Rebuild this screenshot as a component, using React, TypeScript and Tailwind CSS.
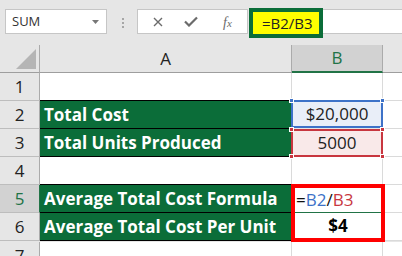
import React from 'react';

const cellFont = "font-['Open_Sans',sans-serif]";

const RowHead = ({ n, active }: { n: number; active?: boolean }) => (
  <div
    className={`w-[40px] h-[28px] shrink-0 flex items-center justify-center border-r border-b text-[17px] ${cellFont} ${
      active
        ? 'bg-[#d2d2d2] border-r-[#217346] border-b-[#bdbdbd] text-[#217346]'
        : 'bg-[#e6e6e6] border-r-[#ababab] border-b-[#bdbdbd] text-[#222]'
    }`}
  >
    {n}
  </div>
);

const GreenCell = ({ text }: { text: string }) => (
  <div className={`w-[251px] h-[28px] shrink-0 flex items-center pl-[4px] bg-[#0b6d39] border-b border-black text-white font-bold text-[17px] ${cellFont}`}>
    {text}
  </div>
);

const Blank = ({ w }: { w: string }) => (
  <div className={`${w} h-[28px] shrink-0 bg-white border-r border-b border-[#dadada]`} />
);

const Corner = ({ color, className }: { color: string; className: string }) => (
  <span className={`absolute w-[5px] h-[5px] ${color} border border-white ${className}`} />
);

export default function App() {
  return (
    <div className="w-[402px] h-[256px] overflow-hidden bg-[#e6e6e6]">
      {/* formula bar */}
      <div className="flex items-start h-[45px] pt-[8px] pl-[5px]">
        <div className="mt-[1px] h-[25px] w-[102px] shrink-0 bg-white border border-[#c6c6c6] flex items-center justify-between pl-[6px] pr-[7px]">
          <span className="text-[13px] text-[#333] font-['Open_Sans',sans-serif]">SUM</span>
          <svg width="7" height="4" viewBox="0 0 7 4"><path d="M0 0h7L3.5 4z" fill="#777" /></svg>
        </div>
        <div className="mt-[10px] ml-[15px] flex flex-col gap-[2px]">
          <span className="w-[2px] h-[2px] bg-[#a6a6a6]" />
          <span className="w-[2px] h-[2px] bg-[#a6a6a6]" />
          <span className="w-[2px] h-[2px] bg-[#a6a6a6]" />
        </div>
        <div className="ml-[13px] mt-[1px] h-[25px] w-[111px] shrink-0 bg-white border border-[#c6c6c6] relative">
          <svg className="absolute left-[15px] top-[7px]" width="10" height="10" viewBox="0 0 10 10">
            <path d="M1 1l8 8M9 1l-8 8" stroke="#6b6b6b" strokeWidth="1.4" />
          </svg>
          <svg className="absolute left-[46px] top-[6px]" width="14" height="11" viewBox="0 0 14 11">
            <path d="M1 5.5l4 4L13 1.5" stroke="#6b6b6b" strokeWidth="2.2" fill="none" />
          </svg>
          <span className="absolute left-[85px] top-[2px] text-[14px] italic text-[#6b6b6b] font-['Liberation_Serif',serif]">
            f<span className="text-[11px]">x</span>
          </span>
        </div>
        <div className="ml-[1px] h-[30px] w-[74px] shrink-0 border-[4px] border-[#0b6d39] bg-[#ffff00] flex items-center pl-[9px] text-[15px] text-[#222] font-['Open_Sans',sans-serif]">
          =B2/B3
        </div>
        <div className="mt-[1px] h-[25px] flex-1 bg-white border-y border-[#c6c6c6]" />
      </div>

      {/* column headers */}
      <div className="flex h-[28px]">
        <div className="w-[40px] shrink-0 border-r border-b border-r-[#ababab] border-b-[#9e9e9e] flex items-end justify-end pr-[3px] pb-[3px]">
          <svg width="20" height="20" viewBox="0 0 20 20"><path d="M20 0V20H0z" fill="#b5b5b5" /></svg>
        </div>
        <div className={`w-[252px] shrink-0 border-r border-b border-r-[#ababab] border-b-[#9e9e9e] flex items-center justify-center text-[17px] text-[#222] ${cellFont}`}>
          A
        </div>
        <div className={`w-[91px] shrink-0 bg-[#d2d2d2] border-r border-r-[#ababab] border-b-2 border-b-[#217346] flex items-center justify-center text-[17px] text-[#217346] ${cellFont}`}>
          B
        </div>
        <div className="flex-1 border-b border-b-[#9e9e9e]" />
      </div>

      {/* row 1 */}
      <div className="flex">
        <RowHead n={1} />
        <Blank w="w-[252px]" />
        <Blank w="w-[91px]" />
        <div className="flex-1 h-[28px] bg-white border-b border-[#dadada]" />
      </div>

      {/* rows 2-3 */}
      <div className="flex">
        <div className="flex flex-col">
          <RowHead n={2} />
          <RowHead n={3} />
        </div>
        <div className="flex flex-col border-t border-black -mt-[1px] border-r">
          <GreenCell text="Total Cost" />
          <GreenCell text="Total Units Produced" />
        </div>
        <div className={`w-[91px] shrink-0 flex flex-col text-[17px] text-[#222] ${cellFont}`}>
          <div className="relative h-[28px] bg-[#e9eef8] flex items-center justify-center border-[2px] border-[#3d72c8] -ml-[1px] -mt-[1px] mb-[1px]">
            $20,000
            <Corner color="bg-[#3d72c8]" className="-left-[4px] -top-[4px]" />
            <Corner color="bg-[#3d72c8]" className="-right-[4px] -top-[4px]" />
          </div>
          <div className="relative h-[28px] bg-[#f9e9e9] flex items-center justify-center border-[2px] border-[#c8363f] -ml-[1px]">
            5000
            <Corner color="bg-[#c8363f]" className="-left-[4px] -top-[4px]" />
            <Corner color="bg-[#c8363f]" className="-right-[4px] -top-[4px]" />
            <Corner color="bg-[#c8363f]" className="-left-[4px] -bottom-[4px]" />
            <Corner color="bg-[#c8363f]" className="-right-[4px] -bottom-[4px]" />
          </div>
        </div>
        <div className="flex-1 flex flex-col">
          <div className="h-[28px] bg-white border-b border-[#dadada]" />
          <div className="h-[28px] bg-white border-b border-[#dadada]" />
        </div>
      </div>

      {/* row 4 */}
      <div className="flex">
        <RowHead n={4} />
        <Blank w="w-[252px]" />
        <Blank w="w-[91px]" />
        <div className="flex-1 h-[28px] bg-white border-b border-[#dadada]" />
      </div>

      {/* rows 5-6 */}
      <div className="flex">
        <div className="flex flex-col">
          <RowHead n={5} active />
          <RowHead n={6} />
        </div>
        <div className="flex flex-col border-t border-black -mt-[1px] border-r">
          <GreenCell text="Average Total Cost Formula" />
          <GreenCell text="Average Total Cost Per Unit" />
        </div>
        <div className={`w-[94px] h-[58px] shrink-0 -ml-[1px] -mt-[1px] border-[4px] border-[#ff0000] bg-white flex flex-col text-[17px] text-[#111] ${cellFont}`}>
          <div className="h-[25px] flex items-center pl-[1px] border-b border-[#217346]">
            =<span className="text-[#3d72c8]">B2</span>/<span className="text-[#c8363f]">B3</span>
          </div>
          <div className="flex-1 flex items-center justify-center font-bold text-black">$4</div>
        </div>
        <div className="flex-1 flex flex-col">
          <div className="h-[28px] bg-white border-b border-[#dadada]" />
          <div className="h-[28px] bg-white border-b border-[#dadada]" />
        </div>
      </div>

      {/* row 7 */}
      <div className="flex">
        <RowHead n={7} />
        <Blank w="w-[252px]" />
        <Blank w="w-[91px]" />
        <div className="flex-1 h-[28px] bg-white border-b border-[#dadada]" />
      </div>
    </div>
  );
}
